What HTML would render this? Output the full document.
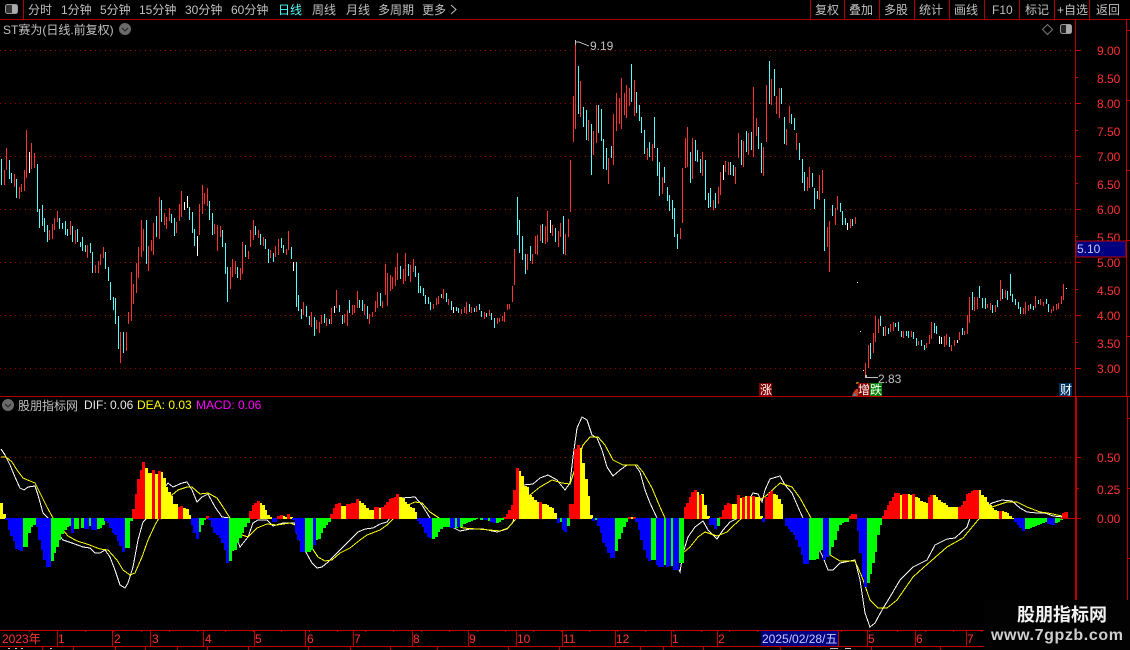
<!DOCTYPE html>
<html><head><meta charset="utf-8">
<style>
html,body{margin:0;padding:0;background:#000;width:1130px;height:650px;overflow:hidden}
svg{display:block}
text{font-family:"Liberation Sans","WenQuanYi Zen Hei","Noto Sans CJK SC",sans-serif;font-size:12px;fill:#c0c0c0}
.a{fill:#ff3232}
.c{shape-rendering:crispEdges}
</style></head><body>
<svg width="1130" height="650" viewBox="0 0 1130 650" xmlns="http://www.w3.org/2000/svg">
<rect width="1130" height="650" fill="#000"/>
<!-- grid -->
<g class="c" stroke="#a00000" stroke-dasharray="1 4" fill="none">
<path d="M0 50.5H1075M0 103.5H1075M0 156.5H1075M0 209.5H1075M0 262.5H1075M0 315.5H1075M0 368.5H1075M0 457.5H1075"/>
</g>
<!-- toolbar -->
<path class="c" d="M0 19.5H1130M23.5 0V19M810.5 0V19M844.5 0V19M879.5 0V19M914.5 0V19M949.5 0V19M984.5 0V19M1019.5 0V19M1054.5 0V19M1089.5 0V19" stroke="#b00000" fill="none"/>
<rect x="5.5" y="4.5" width="12" height="9" rx="2" fill="#333" stroke="#9a9a9a"/><rect x="12" y="5" width="5" height="8" fill="#aaa"/>
<text x="28" y="14">分时</text><text x="61" y="14">1分钟</text><text x="100" y="14">5分钟</text><text x="139" y="14">15分钟</text><text x="185" y="14">30分钟</text><text x="231" y="14">60分钟</text><text x="278" y="14" style="fill:#54fcfc">日线</text><text x="312" y="14">周线</text><text x="346" y="14">月线</text><text x="378" y="14">多周期</text><text x="422" y="14">更多</text>
<path d="M451 5l5 4.500-5 4.500" stroke="#c0c0c0" fill="none"/>
<text x="815" y="14">复权</text><text x="849" y="14">叠加</text><text x="884" y="14">多股</text><text x="919" y="14">统计</text><text x="954" y="14">画线</text><text x="992" y="14">F10</text><text x="1025" y="14">标记</text><text x="1057" y="14">+自选</text><text x="1096" y="14">返回</text>
<text x="3" y="34">ST赛为(日线.前复权)</text>
<circle cx="125" cy="29" r="6" fill="#6a6a6a"/><path d="M122 28l3 3 3-3" stroke="#222" fill="none"/>
<path d="M1047.500 24.500l5 5-5 5-5-5z" stroke="#777" fill="none"/>
<rect x="1060.500" y="24.500" width="11" height="9" rx="2" fill="#222" stroke="#999"/><rect x="1066" y="25" width="5" height="8" fill="#aaa"/>
<!-- candles -->
<g class="c" transform="translate(.5 0)" fill="none" stroke-width="1">
<path stroke="#ff3232" d="M4 170V185M6 148V170M14 174V187M19 187V199M21 184V192M24 170V191M26 130V178M31 143V169M34 153V168M49 230V240M52 224V239M54 218V230M57 211V222M70 221V235M75 230V244M87 245V258M95 265V273M98 261V273M100 254V265M103 247V258M120 332V363M126 332V351M128 312V324M131 272V321M133 284V304M136 263V293M138 247V278M141 220V257M143 229V251M148 246V271M151 240V251M153 223V255M159 197V239M164 213V225M166 217V229M169 208V221M176 222V233M179 204V221M181 191V217M199 204V235M202 185V214M204 193V204M207 188V206M214 224V234M217 225V251M220 226V237M230 267V289M232 259V277M235 261V274M240 268V280M242 242V274M248 251V259M250 230V247M253 220V240M258 230V238M263 237V246M270 250V258M275 246V257M278 239V255M286 249V255M288 231V250M303 302V315M311 312V327M316 320V329M319 322V333M321 315V324M326 318V326M331 308V324M336 290V308M344 314V323M347 310V326M352 305V315M354 305V313M357 291V308M364 304V315M369 314V324M372 312V317M375 301V312M377 292V308M382 301V308M385 264V295M387 273V306M390 275V291M392 277V289M395 267V286M397 253V280M403 269V284M405 253V281M410 265V282M413 259V272M433 304V309M436 298V305M438 296V304M443 289V299M448 299V305M461 309V314M464 307V313M466 302V314M471 307V313M476 306V312M484 312V319M489 310V316M497 318V324M499 318V322M502 316V321M504 312V322M507 304V310M509 304V309M512 286V302M514 249V285M527 254V270M532 254V264M535 236V254M537 235V255M540 225V241M545 226V244M547 211V242M552 225V236M558 231V247M560 223V237M565 234V255M568 219V237M570 160V212M573 96V142M575 40V129M580 81V117M588 120V141M593 131V155M596 105V143M608 158V184M613 114V165M616 93V131M619 98V124M621 78V129M624 93V115M626 85V118M629 88V106M634 80V116M647 148V160M652 144V161M662 177V194M680 228V239M682 168V223M685 138V168M687 127V167M692 138V179M702 152V176M713 200V210M718 187V204M720 172V195M725 161V172M728 162V175M735 167V184M738 133V158M743 141V167M748 133V155M753 87V157M756 118V136M763 147V176M766 85V142M771 79V105M776 96V114M779 88V118M786 129V145M789 106V123M796 133V150M807 177V191M809 167V188M819 175V200M822 170V193M827 227V247M829 221V272M835 208V225M837 196V210M850 219V228M855 217V224M865 363V377M868 345V368M873 333V353M875 316V342M878 319V333M885 326V336M890 324V332M893 322V331M903 331V338M911 331V337M918 341V345M926 343V348M929 335V344M931 322V339M944 336V347M946 334V345M951 345V351M954 340V346M959 332V340M964 331V335M967 315V334M969 297V323M974 297V311M977 297V309M987 304V308M990 303V310M995 305V312M1000 280V301M1005 290V298M1023 308V314M1025 302V314M1028 305V311M1035 296V308M1040 299V305M1043 302V306M1051 309V313M1053 306V311M1056 304V310M1058 303V309M1061 296V304M1063 284V300"/>
<path stroke="#54fcfc" d="M1 159V185M9 160V179M11 173V183M16 179V198M37 164V212M39 209V228M42 205V226M44 218V232M47 225V242M59 218V229M62 223V229M65 221V235M67 229V236M72 226V242M77 229V242M80 242V247M82 237V251M85 245V252M90 243V253M92 252V273M105 252V269M108 267V281M110 282V300M113 297V310M115 298V324M118 316V349M123 332V353M146 220V264M156 216V237M161 200V222M171 214V223M174 218V236M189 207V220M192 212V233M194 229V246M209 201V220M212 213V235M222 230V247M225 243V274M227 267V302M237 267V278M245 245V257M255 226V235M260 234V245M265 239V249M268 249V263M273 253V262M281 238V248M283 245V253M291 247V259M296 262V307M298 295V311M301 309V319M306 306V317M309 316V325M314 317V336M324 314V323M329 319V324M339 305V312M342 315V324M349 300V313M359 300V308M362 300V311M367 306V319M380 293V306M400 266V279M408 264V276M415 266V277M418 273V293M420 286V293M423 288V296M425 295V304M428 297V304M430 302V310M441 294V298M446 293V302M451 301V310M456 307V311M458 308V313M469 304V312M474 308V312M479 304V310M481 311V317M486 313V317M491 313V320M494 318V328M517 197V235M519 220V253M522 236V260M525 254V274M530 246V261M542 224V243M555 228V242M563 216V254M578 66V114M583 107V127M586 110V140M591 124V175M598 105V133M601 109V141M603 139V169M606 148V170M611 146V158M631 64V102M636 92V113M639 105V121M641 117V133M644 130V154M649 142V157M654 117V148M657 148V176M659 162V196M664 167V183M667 187V201M669 195V211M672 200V219M674 208V237M677 234V249M690 152V183M695 140V161M697 150V162M700 159V173M705 160V200M708 193V208M710 188V207M715 193V208M730 162V175M733 165V176M741 140V165M746 131V152M751 132V150M758 127V149M761 143V173M769 61V104M774 69V96M781 88V104M784 117V144M791 114V124M794 118V130M799 143V160M802 159V183M804 172V191M812 173V187M814 188V209M817 191V199M824 199V251M832 205V216M840 203V212M842 211V225M845 218V225M852 219V226M870 343V359M880 316V326M883 327V336M888 328V334M895 323V327M898 322V331M901 331V337M906 331V336M908 331V338M913 332V339M916 338V346M921 340V346M924 345V350M934 323V333M936 326V334M949 337V347M962 328V335M972 292V310M979 286V298M982 298V308M985 298V309M992 305V313M997 300V307M1002 289V299M1007 291V300M1010 274V296M1012 294V302M1015 299V305M1018 302V309M1020 307V314M1030 304V309M1033 306V310M1038 300V304M1046 299V304M1048 304V312"/>
<path stroke="#fff" d="M29 152V173M184 202V210M187 196V208M197 236V256M293 262V271M334 306V313M453 307V313M550 220V233M723 165V180M847 223V230M939 336V344M941 337V344M957 340V343M857 282V283M860 331V332M863 370V371M1066 288V289"/>
</g>
<!-- high/low labels -->
<path class="c" d="M576 42h3l10 4" stroke="#c0c0c0" fill="none"/><path class="c" d="M575.500 40V45" stroke="#c0c0c0"/>
<text x="590" y="50">9.19</text>
<path class="c" d="M866 377.500H878" stroke="#c0c0c0" fill="none"/><rect x="865" y="375" width="2" height="3" fill="#c0c0c0"/>
<text x="878" y="383">2.83</text>
<!-- markers -->
<rect x="759" y="383" width="13" height="13" fill="#800000"/><text x="760" y="394" style="fill:#fff">涨</text>
<path d="M853 393l3-4 2 0 0 7-6 0z" fill="#c04020"/><path d="M853 396l2-3 1 3z" fill="#3090e0"/>
<rect x="856" y="382" width="3" height="2" fill="#a06000"/>
<rect x="858" y="383" width="12" height="13" fill="#800000"/><rect x="870" y="383" width="12" height="13" fill="#008000"/>
<text x="858" y="394" style="fill:#fff">增</text><text x="870" y="394" style="fill:#fff">跌</text>
<rect x="1059" y="383" width="13" height="13" fill="#003060"/><text x="1060" y="394" style="fill:#fff">财</text>
<!-- right axis -->
<path class="c" stroke="#c00000" fill="none" d="M1075.500 20V397M1126.500 20V397M0 396.500H1130M1075 50.500H1081M1075 77.500H1078M1075 103.500H1081M1075 130.500H1078M1075 156.500H1081M1075 183.500H1078M1075 209.500H1081M1075 236.500H1078M1075 262.500H1081M1075 289.500H1078M1075 315.500H1081M1075 342.500H1078M1075 368.500H1081M1126 30.500H1130M1126 100.500H1130M1126 170.500H1130M1126 240.500H1130M1126 336.500H1130"/>
<g class="a">
<text class="a" x="1097" y="55">9.00</text><text class="a" x="1097" y="83">8.50</text><text class="a" x="1097" y="108">8.00</text><text class="a" x="1097" y="136">7.50</text><text class="a" x="1097" y="161">7.00</text><text class="a" x="1097" y="189">6.50</text><text class="a" x="1097" y="214">6.00</text><text class="a" x="1097" y="242">5.50</text><text class="a" x="1097" y="267">5.00</text><text class="a" x="1097" y="295">4.50</text><text class="a" x="1097" y="320">4.00</text><text class="a" x="1097" y="348">3.50</text><text class="a" x="1097" y="373">3.00</text>
</g>
<rect x="1076" y="241" width="50" height="16" fill="#000080" stroke="#c00000"/>
<text x="1077" y="253" style="fill:#c8c8ff">5.10</text>
<!-- indicator legend -->
<circle cx="8" cy="405" r="6" fill="#6a6a6a"/><path d="M5 404l3 3 3-3" stroke="#222" fill="none"/>
<text x="18" y="410">股朋指标网</text>
<text x="84" y="409" style="fill:#e8e8e8">DIF: 0.06</text><text x="137" y="409" style="fill:#ffff00">DEA: 0.03</text><text x="196" y="409" style="fill:#ff00ff">MACD: 0.06</text>
<!-- MACD lines -->
<polyline class="c" fill="none" stroke="#fff" stroke-width="1" points="1,449 5,455 10,465 15,477 20,488 24,490 28,487 35,486 38,495 43,513 48,518 55,530 63,540 72,543 83,547 90,548 95,553 100,553 105,550 110,557 115,570 120,585 125,588 128,583 133,567 138,540 143,522 147,518 155,500 168,483 173,487 182,483 187,482 192,490 197,502 202,497 208,494 215,507 222,517 230,518 240,547 248,537 253,523 258,520 267,520 273,526 283,523 295,523 297,533 303,547 312,563 317,568 322,567 328,562 337,553 343,547 350,540 358,532 365,529 373,528 380,524 387,522 390,518 402,498 415,497 422,505 430,518 452,527 460,531 470,529 483,529 497,532 507,529 513,522 517,503 523,485 533,484 540,478 548,475 557,480 565,490 570,483 573,457 577,428 582,417 587,420 592,435 597,438 602,450 607,467 613,476 620,470 627,465 635,465 640,472 645,490 650,503 657,518 680,572 683,553 688,537 695,527 703,521 708,530 717,539 723,530 730,522 738,518 753,493 758,494 762,502 765,490 770,479 780,476 785,485 792,493 798,507 803,518 823,557 828,570 833,570 840,563 855,560 860,580 865,613 870,627 875,623 882,610 890,597 900,580 913,567 927,560 935,545 947,539 955,538 967,527 970,518 992,503 1002,500 1012,501 1020,508 1027,512 1037,513 1045,513 1053,516 1063,517"/>
<polyline class="c" fill="none" stroke="#ffff00" stroke-width="1" points="1,457 6,457 12,462 17,470 23,478 30,481 35,483 40,493 47,507 53,518 68,536 77,541 87,544 100,549 108,550 117,560 123,570 130,575 135,573 142,557 148,540 155,525 159,518 172,495 178,490 187,487 192,487 200,494 208,493 217,498 223,507 230,518 242,535 248,537 257,528 267,524 277,525 290,523 295,525 312,548 318,557 325,561 332,560 340,553 350,548 360,540 367,535 380,530 387,525 392,520 408,505 415,502 422,503 430,512 439,518 463,528 477,529 490,530 500,531 508,528 515,520 530,495 540,487 552,480 562,483 570,484 577,463 583,445 590,437 598,437 605,445 613,460 623,465 637,465 643,472 652,488 660,507 665,518 683,553 690,547 698,537 705,532 717,536 727,532 733,526 742,518 760,500 767,495 780,483 792,487 800,498 811,518 830,555 840,561 855,561 862,577 870,600 878,608 887,608 897,600 913,577 923,568 947,547 963,538 978,520 992,507 1007,502 1017,502 1027,507 1040,512 1048,513 1062,516 1065,513"/>
<!-- MACD histogram -->
<g class="c" transform="translate(.5 0)" fill="none" stroke-width="3">
<path stroke="#ffff00" d="M1 519V503M4 519V514M146 519V468M148 519V473M151 519V473M156 519V474M161 519V472M164 519V478M166 519V487M169 519V492M171 519V496M174 519V504M176 519V504M184 519V508M187 519V509M189 519V515M260 519V503M263 519V505M265 519V510M268 519V515M270 519V517M283 519V516M286 519V517M291 519V517M342 519V506M344 519V506M359 519V501M362 519V503M364 519V505M367 519V508M369 519V510M372 519V510M380 519V508M400 519V497M403 519V498M405 519V502M408 519V504M410 519V507M413 519V508M415 519V512M519 519V471M522 519V476M525 519V486M527 519V487M530 519V495M532 519V497M535 519V500M537 519V502M542 519V504M545 519V504M547 519V505M550 519V507M552 519V508M555 519V513M580 519V448M583 519V463M586 519V479M588 519V496M591 519V515M631 519V517M697 519V492M702 519V494M705 519V505M708 519V516M733 519V504M735 519V504M741 519V498M746 519V496M751 519V497M756 519V497M758 519V497M761 519V516M774 519V494M776 519V495M779 519V499M781 519V504M901 519V495M908 519V494M911 519V495M916 519V497M918 519V498M921 519V501M924 519V502M926 519V503M934 519V495M936 519V497M939 519V500M941 519V502M944 519V503M946 519V505M949 519V507M951 519V507M954 519V507M957 519V507M979 519V490M982 519V495M985 519V497M987 519V502M990 519V505M992 519V508M995 519V510M997 519V511M1002 519V511M1005 519V512M1007 519V513M1010 519V516M1012 519V518"/>
<path stroke="#ff0000" d="M133 519V509M136 519V494M138 519V479M141 519V470M143 519V462M153 519V470M159 519V471M179 519V507M181 519V506M207 519V516M250 519V511M253 519V505M255 519V503M258 519V501M278 519V516M281 519V515M288 519V514M331 519V514M334 519V508M336 519V504M339 519V503M347 519V504M349 519V504M352 519V503M354 519V503M357 519V499M375 519V507M377 519V507M382 519V507M385 519V505M387 519V502M390 519V499M392 519V498M395 519V497M397 519V494M504 519V517M507 519V514M509 519V510M512 519V505M514 519V490M517 519V468M540 519V502M570 519V504M573 519V504M575 519V449M578 519V445M629 519V517M634 519V517M685 519V507M687 519V503M690 519V497M692 519V492M695 519V490M700 519V495M720 519V517M723 519V510M725 519V505M728 519V503M730 519V504M738 519V495M743 519V497M748 519V496M753 519V496M766 519V497M769 519V493M771 519V491M850 519V516M852 519V514M855 519V514M883 519V516M885 519V510M888 519V505M890 519V501M893 519V497M895 519V493M898 519V493M903 519V494M906 519V494M913 519V494M929 519V497M931 519V495M959 519V507M962 519V505M964 519V501M967 519V494M969 519V493M972 519V491M974 519V490M977 519V490M1000 519V511M1063 519V513M1066 519V512"/>
<path stroke="#00ff00" d="M24 518V547M26 518V547M29 518V533M31 518V527M34 518V525M52 518V561M54 518V553M57 518V547M59 518V540M62 518V534M65 518V530M67 518V527M70 518V526M75 518V529M77 518V529M82 518V528M90 518V526M98 518V529M100 518V528M103 518V525M126 518V548M128 518V548M131 518V521M199 518V532M202 518V525M204 518V520M230 518V561M232 518V551M235 518V550M237 518V543M240 518V538M242 518V533M245 518V527M248 518V523M306 518V552M309 518V552M311 518V550M316 518V540M319 518V539M321 518V533M324 518V528M326 518V525M329 518V522M433 518V539M436 518V537M438 518V532M441 518V529M443 518V527M446 518V527M448 518V527M456 518V528M461 518V527M464 518V524M466 518V523M469 518V522M471 518V521M474 518V520M476 518V519M481 518V520M489 518V521M497 518V523M499 518V522M502 518V520M560 518V522M568 518V526M596 518V520M616 518V551M619 518V539M621 518V533M624 518V527M626 518V522M652 518V560M654 518V560M664 518V565M672 518V566M680 518V563M682 518V563M718 518V526M809 518V560M812 518V560M814 518V560M817 518V559M819 518V551M822 518V550M829 518V555M832 518V547M835 518V540M837 518V531M840 518V525M842 518V523M845 518V522M847 518V522M868 518V583M870 518V574M873 518V563M875 518V552M878 518V535M880 518V525M1025 518V529M1028 518V529M1030 518V528M1033 518V527M1035 518V526M1038 518V525M1040 518V524M1043 518V523M1046 518V522M1056 518V523M1058 518V522M1061 518V520"/>
<path stroke="#0000ff" d="M6 518V520M9 518V530M11 518V536M14 518V541M16 518V549M19 518V550M21 518V551M37 518V527M39 518V540M42 518V550M44 518V560M47 518V567M49 518V567M72 518V533M85 518V529M87 518V529M92 518V530M95 518V530M105 518V521M108 518V523M110 518V528M113 518V533M115 518V535M118 518V541M120 518V546M123 518V552M192 518V525M194 518V533M197 518V539M209 518V520M212 518V527M214 518V533M217 518V535M220 518V538M222 518V543M225 518V550M227 518V563M273 518V522M275 518V522M293 518V520M296 518V533M298 518V540M301 518V552M303 518V552M314 518V545M418 518V521M420 518V524M423 518V527M425 518V533M428 518V537M430 518V538M451 518V528M453 518V528M458 518V527M484 518V520M486 518V520M491 518V522M494 518V523M558 518V523M563 518V530M565 518V532M593 518V521M598 518V526M601 518V533M603 518V543M606 518V547M608 518V553M611 518V558M613 518V558M636 518V522M639 518V530M641 518V540M644 518V550M647 518V558M649 518V561M657 518V565M659 518V567M662 518V567M667 518V567M669 518V566M674 518V570M677 518V570M710 518V525M713 518V525M715 518V529M763 518V522M786 518V526M789 518V529M791 518V532M794 518V535M796 518V540M799 518V547M802 518V555M804 518V564M807 518V564M824 518V560M827 518V557M858 518V531M860 518V553M863 518V577M865 518V587M1015 518V522M1018 518V525M1020 518V528M1023 518V531M1048 518V524M1051 518V525M1053 518V525"/>
</g>
<!-- lower axis -->
<path class="c" stroke="#c00000" fill="none" d="M1075.500 397V600M1076.500 397V600M1127.500 397V600M1075 457.500H1081M1075 488.500H1079M1075 518.500H1081M1127 418.500H1130M1127 488.500H1130M1127 558.500H1130M1060 518.500H1075"/>
<text class="a" x="1097" y="462">0.50</text><text class="a" x="1097" y="494">0.25</text><text class="a" x="1097" y="523">0.00</text>
<!-- time axis -->
<path class="c" stroke="#c00000" fill="none" d="M0 630.500H984M0 646.500H984M57.500 630V646M112.500 630V646M150.500 630V646M203.500 630V646M254.500 630V646M305.500 630V646M353.500 630V646M412.500 630V646M468.500 630V646M516.500 630V646M562.500 630V646M615.500 630V646M671.500 630V646M717.500 630V646M867.500 630V646M915.500 630V646M966.500 630V646M42.500 647V650M73.500 647V650M115.500 647V650M145.500 647V650M177.500 647V650M207.500 647V650M248.500 647V650M308.500 647V650M350.500 647V650M390.500 647V650M437.500 647V650M508.500 647V650M559.500 647V650M640.500 647V650M663.500 647V650M703.500 647V650M780.500 647V650M871.500 647V650M940.500 647V650"/>
<path class="c" d="M29 631.500H984" stroke="#c00000" stroke-dasharray="1 27" fill="none"/>
<rect x="761" y="631" width="77" height="15" fill="#000080"/>
<path class="c" d="M838.500 631V646" stroke="#c00000"/>
<text class="a" x="2" y="643">2023年</text><text class="a" x="58" y="643">1</text><text class="a" x="114" y="643">2</text><text class="a" x="152" y="643">3</text><text class="a" x="205" y="643">4</text><text class="a" x="255" y="643">5</text><text class="a" x="307" y="643">6</text><text class="a" x="354" y="643">7</text><text class="a" x="413" y="643">8</text><text class="a" x="469" y="643">9</text><text class="a" x="517" y="643">10</text><text class="a" x="563" y="643">11</text><text class="a" x="616" y="643">12</text><text class="a" x="672" y="643">1</text><text class="a" x="718" y="643">2</text>
<text x="762" y="643" style="fill:#c8c8ff">2025/02/28/五</text>
<text class="a" x="868" y="643">5</text><text class="a" x="916" y="643">6</text><text class="a" x="967" y="643">7</text>
<path class="c" d="M8 648.500h2M15 648.500h2M21 648.500h2M50 648.500h2M830 648.500h8M845 648.500h6" stroke="#c0c0c0"/>
<!-- watermark -->
<rect x="984" y="601" width="146" height="49" fill="#020202"/>
<text x="1017" y="621" style="font-size:18px;font-weight:bold;fill:#f2f2f2;font-family:'Noto Sans CJK SC','WenQuanYi Zen Hei',sans-serif">股朋指标网</text>
<text x="991" y="640" style="font-size:16px;font-weight:bold;fill:#cfcfcf;letter-spacing:.6px">www.7gpzb.com</text>
</svg>
</body></html>
